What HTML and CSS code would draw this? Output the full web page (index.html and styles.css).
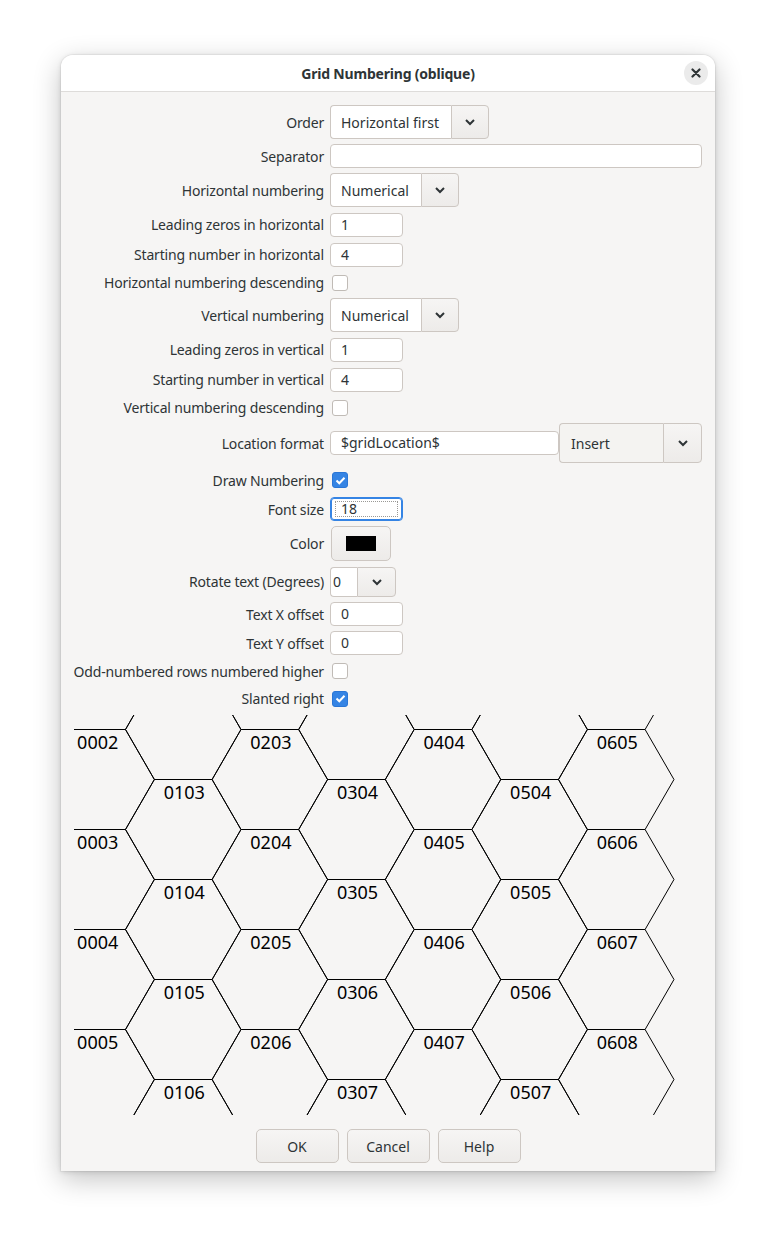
FILE: index.html
```html
<!DOCTYPE html>
<html>
<head>
<meta charset="utf-8">
<link rel="stylesheet" href="styles.css">
</head>
<body>
<div class="page">
<div class="dialog">
  <div class="header">
    <div class="title">Grid Numbering (oblique)</div>
    <button class="close" aria-label="Close">
      <svg width="10" height="10" viewBox="0 0 10 10"><path d="M1.5 1.5 L8.5 8.5 M8.5 1.5 L1.5 8.5" stroke="#2e3436" stroke-width="2.2" stroke-linecap="round"/></svg>
    </button>
  </div>
  <div class="body">
    <div class="form">
      <div class="lbl">Order</div>
      <div class="ctl"><div class="combo"><span class="ctext w121">Horizontal first</span><span class="cbtn"><svg class="chev" width="12" height="8" viewBox="0 0 12 8"><path d="M2 2 L6 6 L10 2" fill="none" stroke="#2e3436" stroke-width="2"/></svg></span></div></div>

      <div class="lbl">Separator</div>
      <div class="ctl"><div class="entry wide"></div></div>

      <div class="lbl">Horizontal numbering</div>
      <div class="ctl"><div class="combo"><span class="ctext w91">Numerical</span><span class="cbtn"><svg class="chev" width="12" height="8" viewBox="0 0 12 8"><path d="M2 2 L6 6 L10 2" fill="none" stroke="#2e3436" stroke-width="2"/></svg></span></div></div>

      <div class="lbl">Leading zeros in horizontal</div>
      <div class="ctl"><div class="entry">1</div></div>

      <div class="lbl">Starting number in horizontal</div>
      <div class="ctl"><div class="entry">4</div></div>

      <div class="lbl">Horizontal numbering descending</div>
      <div class="ctl"><span class="check"></span></div>

      <div class="lbl">Vertical numbering</div>
      <div class="ctl"><div class="combo"><span class="ctext w91">Numerical</span><span class="cbtn"><svg class="chev" width="12" height="8" viewBox="0 0 12 8"><path d="M2 2 L6 6 L10 2" fill="none" stroke="#2e3436" stroke-width="2"/></svg></span></div></div>

      <div class="lbl">Leading zeros in vertical</div>
      <div class="ctl"><div class="entry">1</div></div>

      <div class="lbl">Starting number in vertical</div>
      <div class="ctl"><div class="entry">4</div></div>

      <div class="lbl">Vertical numbering descending</div>
      <div class="ctl"><span class="check"></span></div>

      <div class="lbl">Location format</div>
      <div class="ctl"><div class="entry loc">$gridLocation$</div><div class="combo tall"><span class="ctext w104 insert">Insert</span><span class="cbtn w39"><svg class="chev" width="12" height="8" viewBox="0 0 12 8"><path d="M2 2 L6 6 L10 2" fill="none" stroke="#2e3436" stroke-width="2"/></svg></span></div></div>

      <div class="lbl">Draw Numbering</div>
      <div class="ctl"><span class="check on"><svg width="15" height="15" viewBox="0 0 15 15"><path d="M3.5 7.5 L6.3 10.3 L11.5 4.8" fill="none" stroke="#fff" stroke-width="2"/></svg></span></div>

      <div class="lbl">Font size</div>
      <div class="ctl"><div class="entry focus"><span class="sel">18</span></div></div>

      <div class="lbl">Color</div>
      <div class="ctl"><div class="colorbtn"><span class="swatch"></span></div></div>

      <div class="lbl">Rotate text (Degrees)</div>
      <div class="ctl"><div class="combo small"><span class="ctext w27 rot">0</span><span class="cbtn w39"><svg class="chev" width="12" height="8" viewBox="0 0 12 8"><path d="M2 2 L6 6 L10 2" fill="none" stroke="#2e3436" stroke-width="2"/></svg></span></div></div>

      <div class="lbl">Text X offset</div>
      <div class="ctl"><div class="entry">0</div></div>

      <div class="lbl">Text Y offset</div>
      <div class="ctl"><div class="entry">0</div></div>

      <div class="lbl">Odd-numbered rows numbered higher</div>
      <div class="ctl"><span class="check"></span></div>

      <div class="lbl">Slanted right</div>
      <div class="ctl"><span class="check on"><svg width="15" height="15" viewBox="0 0 15 15"><path d="M3.5 7.5 L6.3 10.3 L11.5 4.8" fill="none" stroke="#fff" stroke-width="2"/></svg></span></div>
    </div>

    <svg class="grid" width="601" height="400" viewBox="0 0 601 400">
      <defs>
        <polygon id="hx" points="0,50 28.87,0 86.6,0 115.47,50 86.6,100 28.87,100" fill="none" stroke="#000" stroke-width="1"/>
      </defs>
      <g>
        <use href="#hx" x="-35.1" y="-85.5"/><use href="#hx" x="-35.1" y="14.5"/><use href="#hx" x="-35.1" y="114.5"/><use href="#hx" x="-35.1" y="214.5"/><use href="#hx" x="-35.1" y="314.5"/>
        <use href="#hx" x="51.5" y="-35.5"/><use href="#hx" x="51.5" y="64.5"/><use href="#hx" x="51.5" y="164.5"/><use href="#hx" x="51.5" y="264.5"/><use href="#hx" x="51.5" y="364.5"/>
        <use href="#hx" x="138.1" y="-85.5"/><use href="#hx" x="138.1" y="14.5"/><use href="#hx" x="138.1" y="114.5"/><use href="#hx" x="138.1" y="214.5"/><use href="#hx" x="138.1" y="314.5"/>
        <use href="#hx" x="224.7" y="-35.5"/><use href="#hx" x="224.7" y="64.5"/><use href="#hx" x="224.7" y="164.5"/><use href="#hx" x="224.7" y="264.5"/><use href="#hx" x="224.7" y="364.5"/>
        <use href="#hx" x="311.3" y="-85.5"/><use href="#hx" x="311.3" y="14.5"/><use href="#hx" x="311.3" y="114.5"/><use href="#hx" x="311.3" y="214.5"/><use href="#hx" x="311.3" y="314.5"/>
        <use href="#hx" x="397.9" y="-35.5"/><use href="#hx" x="397.9" y="64.5"/><use href="#hx" x="397.9" y="164.5"/><use href="#hx" x="397.9" y="264.5"/><use href="#hx" x="397.9" y="364.5"/>
        <use href="#hx" x="484.5" y="-85.5"/><use href="#hx" x="484.5" y="14.5"/><use href="#hx" x="484.5" y="114.5"/><use href="#hx" x="484.5" y="214.5"/><use href="#hx" x="484.5" y="314.5"/>
      </g>
      <g class="nums">
        <text x="3.1" y="33.5">0002</text><text x="3.1" y="133.5">0003</text><text x="3.1" y="233.5">0004</text><text x="3.1" y="333.5">0005</text>
        <text x="89.7" y="83.5">0103</text><text x="89.7" y="183.5">0104</text><text x="89.7" y="283.5">0105</text><text x="89.7" y="383.5">0106</text>
        <text x="176.3" y="33.5">0203</text><text x="176.3" y="133.5">0204</text><text x="176.3" y="233.5">0205</text><text x="176.3" y="333.5">0206</text>
        <text x="262.9" y="83.5">0304</text><text x="262.9" y="183.5">0305</text><text x="262.9" y="283.5">0306</text><text x="262.9" y="383.5">0307</text>
        <text x="349.5" y="33.5">0404</text><text x="349.5" y="133.5">0405</text><text x="349.5" y="233.5">0406</text><text x="349.5" y="333.5">0407</text>
        <text x="436.1" y="83.5">0504</text><text x="436.1" y="183.5">0505</text><text x="436.1" y="283.5">0506</text><text x="436.1" y="383.5">0507</text>
        <text x="522.7" y="33.5">0605</text><text x="522.7" y="133.5">0606</text><text x="522.7" y="233.5">0607</text><text x="522.7" y="333.5">0608</text>
      </g>
    </svg>

    <div class="actions">
      <button class="btn">OK</button>
      <button class="btn">Cancel</button>
      <button class="btn">Help</button>
    </div>
  </div>
</div>
</div>
</body>
</html>
```

FILE: styles.css
```css
html, body {
  margin: 0;
  padding: 0;
  background: #ffffff;
}
body {
  font-family: "Noto Sans", "DejaVu Sans", sans-serif;
  font-size: 14px;
  color: #2e3436;
}
.page {
  box-sizing: border-box;
  min-height: 1238px;
  padding: 55px 0 67px 61px;
}
.dialog {
  width: 654px;
  border-radius: 12px 12px 0 0;
  background: #f6f5f4;
  box-shadow: 0 8px 28px rgba(0, 0, 0, 0.24), 0 1px 5px rgba(0, 0, 0, 0.12), 0 0 0 1px rgba(0, 0, 0, 0.04);
  overflow: hidden;
}
.header {
  height: 36px;
  background: #ffffff;
  border-bottom: 1px solid #dedcda;
  display: flex;
  align-items: center;
  justify-content: center;
  position: relative;
}
.title {
  font-weight: bold;
  font-size: 14px;
  letter-spacing: -0.2px;
  color: #2e3436;
}
.close {
  position: absolute;
  right: 7px;
  top: 6px;
  width: 24px;
  height: 24px;
  border-radius: 50%;
  border: none;
  background: #ebebeb;
  display: flex;
  align-items: center;
  justify-content: center;
  padding: 0;
}
.body {
  padding: 13px 0 8px 0;
}
.form {
  display: grid;
  grid-template-columns: 263px 1fr;
  column-gap: 6px;
  row-gap: 5px;
  grid-template-rows: 34px 24px 34px 25px 25px 21px 34px 25px 25px 21px 40px 24px 24px 35px 31px 24px 24px 22px 23px;
}
.lbl {
  text-align: right;
  align-self: center;
  white-space: nowrap;
  letter-spacing: -0.17px;
  color: #2e3436;
}
.ctl {
  display: flex;
  align-items: center;
}
.entry {
  box-sizing: border-box;
  width: 73px;
  height: 24px;
  background: #ffffff;
  border: 1px solid #cdc7c2;
  border-radius: 4px;
  padding-left: 10px;
  line-height: 22px;
  font-size: 14px;
  color: #2e3436;
}
.entry.wide { width: 372px; }
.entry.loc { width: 229px; }
.entry.focus {
  border: 1px solid #3584e4;
  box-shadow: inset 0 0 0 1px #3584e4;
  padding: 3px 4px;
  line-height: 16px;
}
.sel {
  display: block;
  box-sizing: border-box;
  height: 16px;
  border: 1px dotted #9a9996;
  padding-left: 5px;
  line-height: 14px;
}
.combo {
  display: flex;
  height: 34px;
}
.combo.tall { height: 40px; }
.combo.small { height: 30px; }
.ctext {
  box-sizing: border-box;
  background: #ffffff;
  border: 1px solid #cdc7c2;
  border-right: none;
  border-radius: 4px 0 0 4px;
  padding-left: 10px;
  display: flex;
  align-items: center;
}
.w121 { width: 121px; }
.w91 { width: 91px; }
.w104 { width: 104px; background: #f4f3f1; }
.insert { padding-left: 11px; }
.w27 { width: 27px; }
.rot { padding-left: 2px; }
.cbtn {
  box-sizing: border-box;
  width: 38px;
  background: linear-gradient(#f6f5f4, #edebe9);
  border: 1px solid #cdc7c2;
  border-radius: 0 4px 4px 0;
  display: flex;
  align-items: center;
  justify-content: center;
}
.cbtn.w39 { width: 39px; }
.check {
  box-sizing: border-box;
  width: 16px;
  height: 16px;
  margin-left: 2px;
  background: #ffffff;
  border: 1px solid #c0bbb6;
  border-radius: 3px;
  display: block;
}
.check.on {
  background: #3584e4;
  border-color: #2a76d6;
  position: relative;
}
.check.on svg {
  position: absolute;
  left: -0.5px;
  top: -0.5px;
}
.colorbtn {
  box-sizing: border-box;
  width: 60px;
  height: 35px;
  margin-left: 1px;
  background: linear-gradient(#f6f5f4, #edebe9);
  border: 1px solid #cdc7c2;
  border-radius: 5px;
  display: flex;
  align-items: center;
  justify-content: center;
}
.swatch {
  width: 30px;
  height: 15px;
  background: #000000;
}
.grid {
  display: block;
  margin: 5px 0 0 13px;
  overflow: hidden;
}
.nums text {
  font-family: "Noto Sans", "DejaVu Sans", sans-serif;
  font-size: 18px;
  fill: #000000;
}
.actions {
  display: flex;
  justify-content: center;
  gap: 8px;
  margin-top: 14px;
}
.btn {
  box-sizing: border-box;
  width: 83px;
  height: 34px;
  font-family: "Noto Sans", "DejaVu Sans", sans-serif;
  font-size: 14px;
  color: #2e3436;
  background: linear-gradient(#f6f5f4, #edebe9);
  border: 1px solid #cdc7c2;
  border-radius: 5px;
  padding: 0;
}
```
